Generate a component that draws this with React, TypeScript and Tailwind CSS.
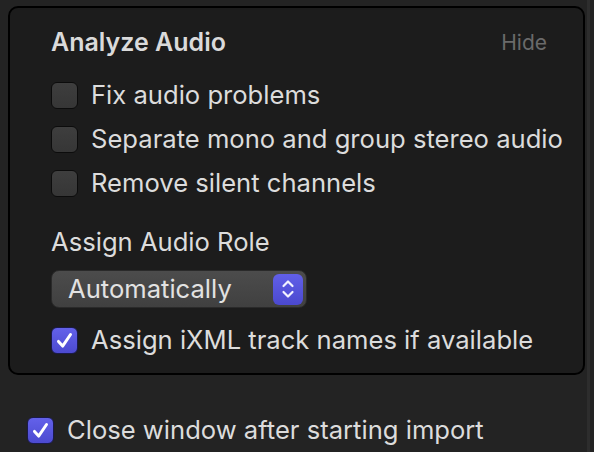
const font = { fontFamily: "Inter, 'Noto Sans', sans-serif" };

const Check = () => (
    <svg width="27" height="27" viewBox="0 0 27 27" className="block">
        <path d="M7 14.5 L11.5 19.5 L20 7" fill="none" stroke="white" strokeWidth="3.2" strokeLinecap="round" strokeLinejoin="round" />
    </svg>
);

const Box = ({ checked = false }: { checked?: boolean }) =>
    checked ? (
        <span className="w-[27px] h-[27px] shrink-0 rounded-[6px] border border-[#1a1a4a] bg-gradient-to-b from-[#6361ea] to-[#4c4ad0] flex items-center justify-center">
            <Check />
        </span>
    ) : (
        <span className="w-[27px] h-[27px] shrink-0 rounded-[6px] border border-[#0c0c0c] bg-gradient-to-b from-[#3e3e3e] to-[#363636]" />
    );

const Row = ({ label, checked = false, className = "" }: { label: string; checked?: boolean; className?: string }) => (
    <div className={`flex items-center h-[44px] gap-[13px] ${className}`}>
        <Box checked={checked} />
        <span className="text-[25.6px] text-[#dcdcdc] leading-none whitespace-nowrap">{label}</span>
    </div>
);

export default function App() {
    return (
        <div className="w-[594px] h-[452px] bg-[#232323] flex overflow-hidden" style={font}>
            <div className="flex-1 flex flex-col">
                <div className="mt-[6px] ml-[8px] w-[577px] h-[369px] border-2 border-black rounded-[10px] bg-[#1c1c1c] pl-[41px] pr-[36px] pt-[20px] flex flex-col">
                    <div className="flex items-center justify-between h-[28px]">
                        <span className="text-[25px] font-semibold text-[#dadada] leading-none">Analyze Audio</span>
                        <span className="text-[21px] text-[#6a6a6a] leading-none">Hide</span>
                    </div>
                    <div className="mt-[17px]">
                        <Row label="Fix audio problems" />
                        <Row label="Separate mono and group stereo audio" />
                        <Row label="Remove silent channels" />
                    </div>
                    <div className="mt-[23px] h-[28px] flex items-center text-[25.6px] text-[#dcdcdc] leading-none whitespace-nowrap">Assign Audio Role</div>
                    <div className="mt-[14px] w-[256px] h-[38px] rounded-[8px] bg-gradient-to-b from-[#4c4c4c] to-[#404040] border border-[#2a2a2a] flex items-center justify-between pl-[16px] pr-[3px]">
                        <span className="text-[25.6px] text-[#e2e2e2] leading-none">Automatically</span>
                        <span className="w-[30px] h-[31px] rounded-[6px] bg-gradient-to-b from-[#615fe8] to-[#4b49cf] flex items-center justify-center">
                            <svg width="16" height="22" viewBox="0 0 16 22">
                                <path d="M3.5 8 L8 3.5 L12.5 8 M3.5 14 L8 18.5 L12.5 14" fill="none" stroke="#f2f2ff" strokeWidth="2.2" strokeLinecap="round" strokeLinejoin="round" />
                            </svg>
                        </span>
                    </div>
                    <Row label="Assign iXML track names if available" checked className="mt-[10px]" />
                </div>
                <Row label="Close window after starting import" checked className="mt-[33px] ml-[27px]" />
            </div>
            <div className="w-[3px] mr-[4px] bg-[#2d2d2d]" />
        </div>
    );
}
